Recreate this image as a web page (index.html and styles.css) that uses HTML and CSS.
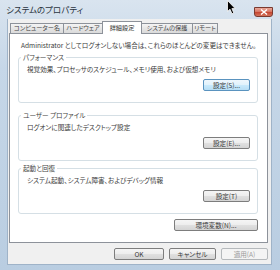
FILE: index.html
```html
<!DOCTYPE html>
<html lang="ja">
<head>
  <meta charset="UTF-8">
  <title>システムのプロパティ</title>
  <link rel="stylesheet" href="styles.css">
</head>
<body>
  <div class="window">
    <div class="titlebar">
      <span class="title">システムのプロパティ</span>
      <span class="close-button">
        <svg viewBox="0 0 8 6" width="8" height="6"><path d="M1 0.5 L7 5.5 M7 0.5 L1 5.5" stroke="#fff" stroke-width="1.4"/></svg>
      </span>
    </div>

    <div class="client">
      <div class="tabs">
        <span class="tab tab-computer">コンピューター名</span>
        <span class="tab tab-hardware">ハードウェア</span>
        <span class="tab tab-advanced selected">詳細設定</span>
        <span class="tab tab-protect">システムの保護</span>
        <span class="tab tab-remote">リモート</span>
      </div>

      <div class="panel">
        <p class="note">Administrator としてログオンしない場合は、これらのほとんどの変更はできません。</p>

        <fieldset class="group first">
          <legend>パフォーマンス</legend>
          <div class="group-body">
            <p>視覚効果、プロセッサのスケジュール、メモリ使用、および仮想メモリ</p>
            <div class="button-row"><button class="win-button focused">設定(S)...</button></div>
          </div>
        </fieldset>

        <fieldset class="group second">
          <legend>ユーザー プロファイル</legend>
          <div class="group-body">
            <p>ログオンに関連したデスクトップ設定</p>
            <div class="button-row"><button class="win-button">設定(E)...</button></div>
          </div>
        </fieldset>

        <fieldset class="group third">
          <legend>起動と回復</legend>
          <div class="group-body">
            <p>システム起動、システム障害、およびデバッグ情報</p>
            <div class="button-row"><button class="win-button">設定(T)</button></div>
          </div>
        </fieldset>

        <div class="env-row"><button class="win-button env-button">環境変数(N)...</button></div>
      </div>

      <div class="footer">
        <button class="win-button ok-button">OK</button>
        <button class="win-button">キャンセル</button>
        <button class="win-button" disabled>適用(A)</button>
      </div>
    </div>

    <svg class="cursor" viewBox="0 0 10 15" width="10" height="15">
      <path d="M0.5 0.5 L0.5 11.5 L3 9.2 L5 13.8 L6.8 13 L4.9 8.6 L8.2 8.6 Z" fill="#000" stroke="#fff" stroke-width="0.8"/>
    </svg>
  </div>
</body>
</html>
```

FILE: styles.css
```css
* {
  box-sizing: border-box;
}

body {
  margin: 0;
  padding: 0;
  width: 280px;
  height: 270px;
  overflow: hidden;
  font-family: "Noto Sans CJK JP", "Noto Sans", sans-serif;
  font-size: 6.6px;
  font-feature-settings: "palt";
  color: #3a3a3a;
}

.window {
  position: relative;
  width: 280px;
  height: 270px;
  display: flex;
  flex-direction: column;
  background: linear-gradient(#d9e4ef, #c6d7e8 25%, #b9cde1);
}

.titlebar {
  height: 19px;
  display: flex;
  justify-content: space-between;
  align-items: flex-start;
}

.title {
  margin-left: 6px;
  line-height: 19px;
  font-size: 8.5px;
  color: #2a3440;
}

.close-button {
  margin-top: 7px;
  margin-right: 7px;
  width: 19px;
  height: 10px;
  display: flex;
  align-items: center;
  justify-content: center;
  border: 1px solid #7a3a30;
  border-radius: 0 0 3px 3px;
  background: linear-gradient(#e9a99b, #d6715e 50%, #c5432f 51%, #d3735c);
}

.client {
  flex: 1;
  margin: 0 8px 5px 7px;
  padding: 0 3px 0 1px;
  background: #f0f0f0;
  border: 1px solid #9fb3c8;
  border-top: none;
}

.tabs {
  height: 14px;
  padding: 2px 0 0 1px;
  display: flex;
  align-items: flex-end;
}

.tab {
  height: 10px;
  line-height: 8px;
  font-size: 6.2px;
  text-align: center;
  border: 1px solid #8d929a;
  border-bottom: none;
  margin-right: -1px;
  background: linear-gradient(#f4f4f4, #e6e6e6 50%, #dadada);
  color: #444;
  white-space: nowrap;
  overflow: hidden;
}

.tab.selected {
  position: relative;
  z-index: 1;
  height: 13px;
  line-height: 11px;
  margin-bottom: -1px;
  background: #fff;
  color: #333;
}

.tab-computer { width: 54px; }
.tab-hardware { width: 40px; }
.tab-advanced { width: 40px; }
.tab-protect { width: 52px; }
.tab-remote { width: 26px; }

.panel {
  height: 210px;
  padding: 6px 9px 0 8px;
  background: #fff;
  border: 1px solid #8d929a;
}

.note {
  margin: 0;
  padding-left: 3px;
  line-height: 10px;
  white-space: nowrap;
}

.group {
  margin: 3px 0 0;
  padding: 0;
  border: 1px solid #d5dfe5;
  border-radius: 3px;
  min-width: 0;
}

.group.second {
  margin-top: 8px;
}

.group.third {
  margin-top: 3px;
}

.group legend {
  margin-left: 2px;
  padding: 0 2px;
  line-height: 9px;
  color: #444;
}

.group-body {
  padding: 2px 7px 11px 8px;
}

.group-body p {
  margin: 0;
  line-height: 10px;
  white-space: nowrap;
}

.button-row {
  margin-top: 5px;
  display: flex;
  justify-content: flex-end;
}

.win-button {
  width: 47px;
  height: 12px;
  padding: 0;
  font-family: inherit;
  font-size: 6.6px;
  font-feature-settings: "palt";
  line-height: 10px;
  color: #3a3a3a;
  border: 1px solid #7d7d7d;
  border-radius: 2px;
  background: linear-gradient(#f5f5f5, #ededed 50%, #e0e0e0 51%, #d4d4d4);
}

.win-button.focused {
  border-color: #5a93bf;
  background: linear-gradient(#eef7fd, #e0f2fc 50%, #c9eafc 51%, #b6def5);
}

.win-button:disabled {
  color: #9a9a9a;
  border-color: #b5b9bc;
  background: #f4f4f4;
}

.env-row {
  margin-top: 5px;
  display: flex;
  justify-content: flex-end;
}

.env-button {
  width: 84px;
}

.footer {
  margin-top: 5px;
  display: flex;
  justify-content: flex-end;
  gap: 5px;
}

.ok-button {
  width: 50px;
}

.cursor {
  position: absolute;
  left: 227px;
  top: 0;
}
```
